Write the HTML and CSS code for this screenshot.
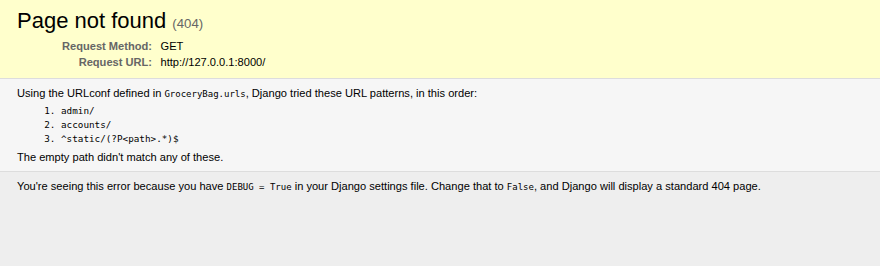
FILE: index.html
```html
<!DOCTYPE html>
<html lang="en">
<head>
    <meta charset="UTF-8">
    <title>Page not found at /</title>
    <link rel="stylesheet" href="styles.css">
</head>
<body>
    <div id="summary" class="section">
        <h1>Page not found <span>(404)</span></h1>
        <table class="meta">
            <tr>
                <th>Request Method:</th>
                <td>GET</td>
            </tr>
            <tr>
                <th>Request URL:</th>
                <td>http://127.0.0.1:8000/</td>
            </tr>
        </table>
    </div>
    <div id="info" class="section">
        <p>Using the URLconf defined in <code>GroceryBag.urls</code>, Django tried these URL patterns, in this order:</p>
        <ol>
            <li>admin/</li>
            <li>accounts/</li>
            <li>^static/(?P&lt;path&gt;.*)$</li>
        </ol>
        <p>The empty path didn't match any of these.</p>
    </div>
    <div id="explanation" class="section">
        <p>You're seeing this error because you have <code>DEBUG = True</code> in your Django settings file. Change that to <code>False</code>, and Django will display a standard 404 page.</p>
    </div>
</body>
</html>
```

FILE: styles.css
```css
html * {
    padding: 0;
    margin: 0;
}
body {
    font: 11.1px 'Liberation Sans', Arial, sans-serif;
    background: #eee;
    color: #000;
    min-height: 266px;
}
.section {
    padding: 8px 17px;
    border-bottom: 1px solid #ddd;
}
h1 {
    font-weight: normal;
    font-size: 22px;
    margin-bottom: 4px;
}
h1 span {
    font-size: 60%;
    color: #666;
}
table {
    border: none;
    border-collapse: collapse;
    width: 100%;
}
td, th {
    vertical-align: top;
    padding: 2px 3px;
}
th {
    width: 132px;
    text-align: right;
    color: #666;
    padding-right: 5.5px;
}
code {
    font-family: 'DejaVu Sans Mono', monospace;
    font-size: 9px;
}
#summary {
    background: #ffc;
}
#info {
    background: #f6f6f6;
}
#info ol {
    margin: 5px 44px;
}
#info ol li {
    font-family: 'DejaVu Sans Mono', monospace;
    font-size: 9.3px;
    line-height: 14px;
}
#explanation {
    border-bottom: none;
}
```
